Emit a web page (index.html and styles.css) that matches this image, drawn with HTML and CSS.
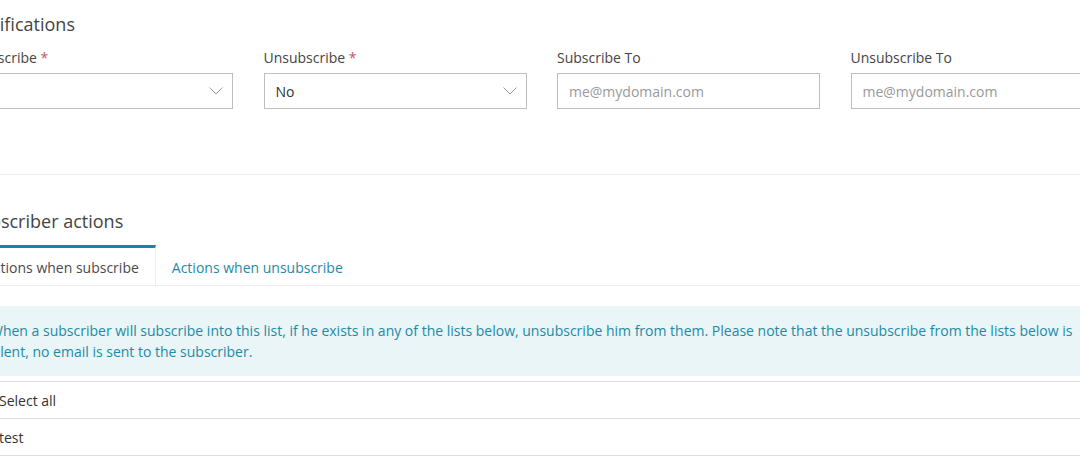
FILE: index.html
```html
<!DOCTYPE html>
<html>
<head>
<meta charset="utf-8">
<link rel="stylesheet" href="styles.css">
</head>
<body>
<div class="page">
  <section class="notifications">
    <h2 class="title">Notifications</h2>
    <div class="fields">
      <div class="field">
        <label class="label sub">Subscribe <span class="req">*</span></label>
        <div class="select"><span class="value"></span>
          <svg class="chev" width="14" height="8" viewBox="0 0 14 8"><path d="M0.5 0.5 L7 7 L13.5 0.5" fill="none" stroke="#9a9a9a" stroke-width="1"/></svg>
        </div>
      </div>
      <div class="field">
        <label class="label">Unsubscribe <span class="req">*</span></label>
        <div class="select"><span class="value">No</span>
          <svg class="chev" width="14" height="8" viewBox="0 0 14 8"><path d="M0.5 0.5 L7 7 L13.5 0.5" fill="none" stroke="#9a9a9a" stroke-width="1"/></svg>
        </div>
      </div>
      <div class="field">
        <label class="label">Subscribe To</label>
        <div class="input"><span class="placeholder">me@mydomain.com</span></div>
      </div>
      <div class="field">
        <label class="label">Unsubscribe To</label>
        <div class="input"><span class="placeholder">me@mydomain.com</span></div>
      </div>
    </div>
  </section>
  <hr class="divider">
  <section class="actions">
    <h2 class="title">Subscriber actions</h2>
    <div class="tabs">
      <div class="tab active">Actions when subscribe</div>
      <div class="tab">Actions when unsubscribe</div>
    </div>
    <div class="info">When a subscriber will subscribe into this list, if he exists in any of the lists below, unsubscribe him from them. Please note that the unsubscribe from the lists below is silent, no email is sent to the subscriber.</div>
    <div class="list">
      <div class="row"><span class="box"></span>Select all</div>
      <div class="row"><span class="box"></span>test</div>
    </div>
  </section>
</div>
</body>
</html>
```

FILE: styles.css
```css
html, body {
  margin: 0;
  padding: 0;
  background: #fff;
  overflow: hidden;
}
body {
  font-family: "Open Sans", "Liberation Sans", sans-serif;
  color: #444;
  font-size: 14px;
}
.page {
  margin-left: -31px;
  width: 1150px;
}
.title {
  margin: 0;
  font-size: 18px;
  font-weight: 400;
  color: #444;
  line-height: 24px;
}
.notifications {
  padding-top: 12px;
}
.fields {
  margin-top: 12px;
  display: grid;
  grid-template-columns: 264px repeat(3, 263px);
  column-gap: 30.5px;
}
.field {
  display: flex;
  flex-direction: column;
}
.label {
  line-height: 20px;
  color: #444;
  margin-bottom: 5px;
}
.label.sub {
  padding-left: 4px;
}
.req {
  color: #d0506a;
}
.select, .input {
  box-sizing: border-box;
  height: 36px;
  border: 1px solid #bdbdbd;
  display: flex;
  align-items: center;
  justify-content: space-between;
  padding: 0 9px 0 11px;
  background: #fff;
}
.value {
  color: #333;
}
.placeholder {
  color: #999;
}
.chev {
  display: block;
}
.divider {
  border: 0;
  border-top: 1px solid #eee;
  margin: 65px 0 0 0;
  height: 0;
}
.actions {
  padding-top: 34px;
}
.tabs {
  margin-top: 12px;
  display: flex;
  border-bottom: 1px solid #eee;
}
.tab {
  padding: 9px 16px 7px 16px;
  line-height: 21px;
  color: #1d8aa6;
  border-top: 3px solid transparent;
}
.tab.active {
  color: #4a4a4a;
  border-top-color: #0b8aa6;
  border-right: 1px solid #eee;
  margin-left: -12px;
  padding-left: 28px;
}
.info {
  margin-top: 20px;
  background: #e9f5f7;
  color: #1d8aa6;
  line-height: 21px;
  padding: 14px 16px 14px 21px;
}
.list {
  margin-top: 5px;
  border-top: 1px solid #ddd;
}
.row {
  height: 36px;
  border-bottom: 1px solid #ddd;
  display: flex;
  align-items: center;
  color: #333;
}
.box {
  width: 14px;
  height: 14px;
  border: 1px solid #bbb;
  margin: 0 14px 0 0;
  flex: none;
}
```
